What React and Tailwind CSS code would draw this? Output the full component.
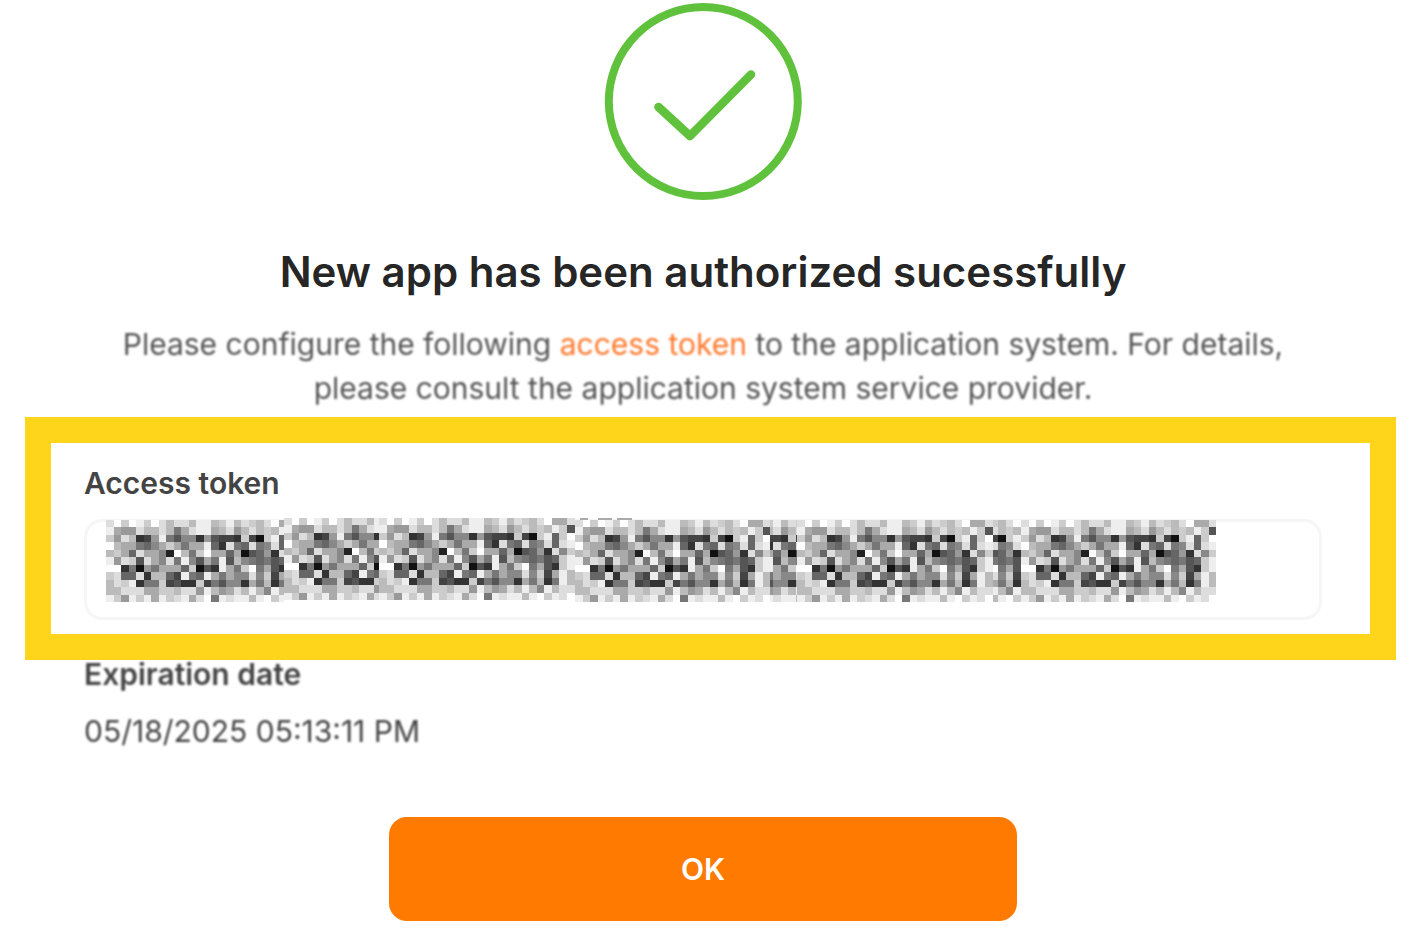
import React from "react";

// grey level of every mosaic cell, 0 is black and f is white
const rows = [
  "dfcfecfdbddbeebcebdcbdfaad",
  "ea99dbbdb7adeeabd9bdbcbec5",
  "c9db349e7588395443c41ce6cf",
  "fbaa768aca7aae63d76d78d6de",
  "bca6daa82fb7cfaa6a15693d8c",
  "e9dc5da8d7e85a7e5b876756ce",
  "ff37197aaa6c153ea7cf7a53ce",
  "cd66d3bb64e76ea7a88d8c4aeb",
  "bdce377c4533c475883a7b37eb",
  "bbdddaaccbdd9eb9adbeb8ebdd",
  "ec9eceaecdeadf7edeebefcedf",
];

// x: left edge, w: visible width, y: top edge, skip: pixels of the pattern cut off on the left
const patches = [
  { x: 0, y: 2, w: 178, skip: 0 },
  { x: 178, y: 0, w: 95, skip: 0 },
  { x: 273, y: 0, w: 196, skip: 0 },
  { x: 469, y: 2, w: 195, skip: 0 },
  { x: 664, y: 2, w: 27, skip: 117 },
  { x: 691, y: 2, w: 196, skip: 0 },
  { x: 887, y: 2, w: 28, skip: 145 },
  { x: 915, y: 2, w: 195, skip: 0 },
];

const Mosaic = () => {
  return (
    <svg
      className="absolute left-[22px] -top-px w-[1110px] max-w-[90%] pointer-events-none"
      viewBox="0 0 1110 84"
      shapeRendering="crispEdges"
      aria-hidden="true"
    >
      {patches.map((p) => (
        <svg
          key={p.x}
          x={p.x}
          y={p.y}
          width={p.w}
          height={82}
          viewBox={`${p.skip} 0 ${p.w} 82`}
        >
          {rows.map((row, r) =>
            row.split("").map((c, i) => (
              <rect
                key={`${r}-${i}`}
                x={i * 7.52}
                y={r * 7.48}
                width={7.6}
                height={7.6}
                fill={`#${c}${c}${c}`}
              />
            ))
          )}
        </svg>
      ))}
      <path d="M474 1h8M492 1h14M511 1h15" stroke="#aaa" strokeWidth="2" />
    </svg>
  );
};

const SuccessIcon = () => {
  return (
    <svg
      className="w-[200px] h-[200px]"
      viewBox="0 0 200 200"
      fill="none"
      stroke="#5fc13c"
      aria-hidden="true"
    >
      <circle cx="100.300" cy="101.500" r="94.500" strokeWidth="8" />
      <path
        d="M55.500 107L87 136L148 74.500"
        strokeWidth="8.500"
        strokeLinecap="round"
        strokeLinejoin="round"
      />
    </svg>
  );
};

const App = () => {
  return (
    <main className="bg-white min-h-screen pr-2 pb-4 font-['Inter','Liberation_Sans',sans-serif]">
      <header className="flex flex-col items-center text-center">
        <SuccessIcon />
        <h1 className="mt-12 text-[42px] leading-12 font-semibold text-[#262626]">
          New app has been authorized sucessfully
        </h1>
        <p className="mt-[26px] max-w-[1200px] text-[30px] leading-11 text-[#555] blur-[1px]">
          Please configure the following{" "}
          <a href="#token" className="text-[#ff7a2e]">
            access token
          </a>{" "}
          to the application system. For details, please consult the application
          system service provider.
        </p>
      </header>

      <section className="mt-[7px] ml-[25px] mr-[10px] border-[26px] border-[#ffd51c] pt-5 pb-[14px] pl-[33px] pr-12">
        <label
          htmlFor="token"
          className="block text-[30px] leading-10 font-semibold text-[#444]"
        >
          Access token
        </label>
        <div className="relative mt-4">
          <input
            id="token"
            type="text"
            readOnly
            className="block w-full h-[101px] rounded-[18px] border-[3px] border-[#f6f6f6] bg-white px-5 outline-none"
          />
          <Mosaic />
        </div>
      </section>

      <dl className="pl-[84px] blur-[1px]">
        <dt className="-mt-[6px] text-[30px] leading-10 font-semibold text-[#444]">
          Expiration date
        </dt>
        <dd className="mt-[15px] text-[30px] leading-11 text-[#444]">
          05/18/2025 05:13:11 PM
        </dd>
      </dl>

      <button
        type="button"
        className="block mx-auto mt-16 w-[628px] max-w-full h-[104px] rounded-[18px] bg-[#ff7a00] text-white text-[30px] font-semibold cursor-pointer"
      >
        OK
      </button>
    </main>
  );
};

export default App;
